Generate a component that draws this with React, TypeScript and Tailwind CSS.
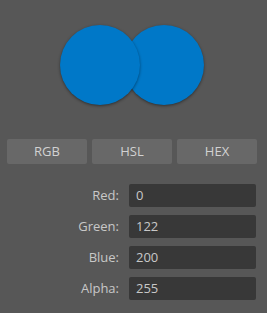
import React from "react";

export default function App() {
  const rows: [string, string][] = [
    ["Red:", "0"],
    ["Green:", "122"],
    ["Blue:", "200"],
    ["Alpha:", "255"],
  ];
  return (
    <div
      className="w-[267px] h-[313px] bg-[#575757] flex flex-col"
      style={{ fontFamily: '"Open Sans", "Noto Sans", sans-serif' }}
    >
      <div className="h-[139px] flex justify-center pt-[25px] pr-[3px]">
        <div className="flex">
          <div className="w-[80px] h-[80px] rounded-full bg-[#0078c8] shadow-[0_1px_3px_rgba(0,0,0,0.45)] relative z-10" />
          <div className="w-[80px] h-[80px] rounded-full bg-[#0078c8] shadow-[0_1px_3px_rgba(0,0,0,0.45)] -ml-[16px]" />
        </div>
      </div>
      <div className="flex gap-[5px] px-[7px]">
        {["RGB", "HSL", "HEX"].map((t) => (
          <div
            key={t}
            className="w-[80px] h-[25px] bg-[#686868] rounded-[2px] flex items-center justify-center text-[13px] text-[#d2d2d2]"
          >
            {t}
          </div>
        ))}
      </div>
      <div className="flex flex-col gap-[8px] mt-[20px]">
        {rows.map(([l, v]) => (
          <div key={l} className="flex items-center">
            <div className="w-[119px] text-right text-[13px] text-[#c8c8c8]">{l}</div>
            <div className="ml-[10px] w-[127px] h-[23px] bg-[#383838] rounded-[2px] flex items-center pl-[7px] text-[13px] text-[#c8c8c8]">
              {v}
            </div>
          </div>
        ))}
      </div>
    </div>
  );
}
